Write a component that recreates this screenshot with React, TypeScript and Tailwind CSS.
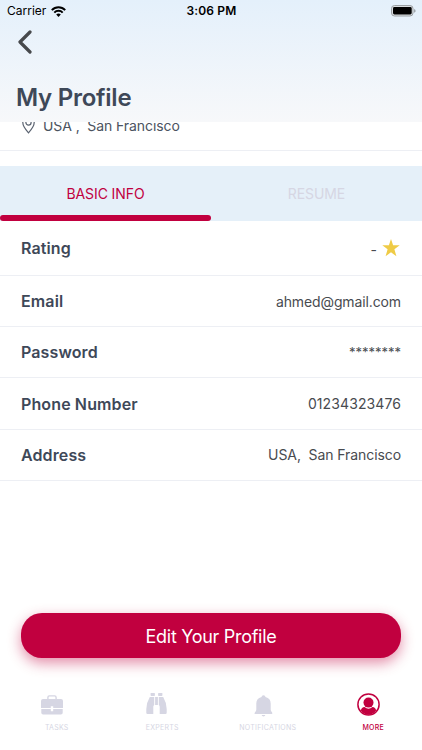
import React, { useState } from 'react';

const tabs = ['BASIC INFO', 'RESUME'];

const StatusBar: React.FC = () => (
  <div className="h-[22px] grid grid-cols-3 items-center pl-[7px] pr-[6px] text-black">
    <div className="flex items-center gap-[5px]">
      <span className="text-[12px] leading-none">Carrier</span>
      <svg className="w-[15px] h-[11px]" viewBox="0 0 15 11">
        <g fill="none" stroke="currentColor" strokeWidth="2">
          <path d="M0.8 4.1 C4.5 0.3 10.5 0.3 14.2 4.1" />
          <path d="M3.3 6.6 C5.6 4.2 9.4 4.2 11.7 6.6" />
        </g>
        <path d="M5.2 8.5 C6.5 7.2 8.5 7.2 9.8 8.5 L7.5 10.9 Z" fill="currentColor" />
      </svg>
    </div>
    <span className="text-center text-[12px] leading-none font-semibold tracking-[0.15px]">3:06 PM</span>
    <svg className="w-[25px] h-[12px] justify-self-end" viewBox="0 0 25 12">
      <rect x="0.5" y="0.5" width="21.5" height="10.5" rx="3" fill="#d9dde0" stroke="#9ba0a4" />
      <rect x="2" y="2" width="18.7" height="7.5" rx="1.4" fill="#000" />
      <path d="M23.2 4 V7.8 C25 7.2 25 4.6 23.2 4 Z" fill="#8f9498" />
    </svg>
  </div>
);

const Star: React.FC = () => (
  <svg className="w-[18px] h-[18px]" viewBox="0 0 18 18" fill="#efcb46">
    <path d="M9 0 L11.1 6.3 H17.7 L12.4 10.3 L14.4 17.3 L9 13.2 L3.6 17.3 L5.6 10.3 L0.3 6.3 H6.9 Z" />
  </svg>
);

interface RowProps {
  label: string;
  tall?: boolean;
  valueClass?: string;
  children: React.ReactNode;
}

const Row: React.FC<RowProps> = ({ label, tall, valueClass = 'text-[14px] tracking-[-0.08px]', children }) => (
  <div className={`flex items-center justify-between px-[21px] border-b border-[#edeff4] ${tall ? 'h-[54.9px]' : 'h-[51.25px]'}`}>
    <span className="text-[16px] font-semibold tracking-[0.12px] text-[#3e4858]">{label}</span>
    <span className={`text-[#484b50] whitespace-pre flex items-center ${valueClass}`}>{children}</span>
  </div>
);

const BriefcaseIcon = () => (
  <svg className="w-[22px] h-[20px]" viewBox="0 0 22 20" fill="currentColor">
    <path d="M6.2 4 V2.4 Q6.2 0.3 8.3 0.3 H13.7 Q15.8 0.3 15.8 2.4 V4 H14.4 V2.5 Q14.4 1.6 13.5 1.6 H8.5 Q7.6 1.6 7.6 2.5 V4 Z" />
    <path d="M2 4 H20 Q22 4 22 6 V12.9 H12.2 V11.2 H9.8 V12.9 H0 V6 Q0 4 2 4 Z" />
    <path d="M0.3 14 H9.8 V16.2 H12.2 V14 H21.7 V17.7 Q21.7 19.5 19.9 19.5 H2.1 Q0.3 19.5 0.3 17.7 Z" />
  </svg>
);

const BinocularsIcon = () => (
  <svg className="w-[21px] h-[21px]" viewBox="0 0 21 21" fill="currentColor">
    <rect x="4.6" y="0" width="4.3" height="2.9" rx="0.6" />
    <rect x="12.1" y="0" width="4.3" height="2.9" rx="0.6" />
    <path d="M3.8 4 H8.2 V12 Q7.3 12.6 7.3 13.8 V21 H1.5 Q0.3 21 0.3 19.8 V16 Q0.7 9 3.8 4 Z" />
    <path d="M17.2 4 H12.8 V12 Q13.7 12.6 13.7 13.8 V21 H19.5 Q20.7 21 20.7 19.8 V16 Q20.3 9 17.2 4 Z" />
    <rect x="9.1" y="4" width="2.8" height="8" />
  </svg>
);

const BellIcon = () => (
  <svg className="w-[19px] h-[22px]" viewBox="0 0 19 22" fill="currentColor">
    <path d="M9.5 0.3 Q11.3 0.3 11.5 2.1 Q16.7 3.5 16.7 8.6 V14.8 Q16.7 16.2 18 17.2 Q19 18.9 17.8 18.9 H1.2 Q0 18.9 1 17.2 Q2.3 16.2 2.3 14.8 V8.6 Q2.3 3.5 7.5 2.1 Q7.7 0.3 9.5 0.3 Z" />
    <path d="M7.6 20 H11.4 Q11 21.4 9.5 21.4 Q8 21.4 7.6 20 Z" />
  </svg>
);

const UserIcon = () => (
  <svg className="w-[23px] h-[23px]" viewBox="0 0 23 23">
    <circle cx="11.5" cy="11.5" r="10.6" fill="none" stroke="currentColor" strokeWidth="1.5" />
    <circle cx="11.5" cy="9.6" r="5" fill="currentColor" />
    <path d="M3.8 17.5 Q4.6 14.2 7.5 14 Q11.5 17.4 15.5 14 Q18.4 14.2 19.2 17.5 Q16.5 21.6 11.5 21.8 Q6.5 21.6 3.8 17.5 Z" fill="currentColor" />
  </svg>
);

const navItems = [
  { label: 'TASKS', Icon: BriefcaseIcon, iconClass: 'pt-[1px] pr-[2px]' },
  { label: 'EXPERTS', Icon: BinocularsIcon, iconClass: 'pb-[2px] pr-[4px]' },
  { label: 'NOTIFICATIONS', Icon: BellIcon, iconClass: 'pt-[3px]' },
  { label: 'MORE', Icon: UserIcon, iconClass: 'pr-[2px]' },
];

export default function App() {
  const [activeTab, setActiveTab] = useState(0);

  return (
    <div className="w-full h-[750px] bg-white flex flex-col overflow-hidden font-['Inter','Liberation_Sans',sans-serif]">
      <header className="h-[122px] shrink-0 bg-linear-to-b from-[#e4f0fb] to-[#f7f8fa]">
        <StatusBar />
        <button className="block pl-[18px] pt-[8px]" aria-label="Back">
          <svg className="w-[14px] h-[24px]" viewBox="0 0 14 24" fill="none" stroke="#47494c" strokeWidth="3.2" strokeLinecap="round" strokeLinejoin="round">
            <path d="M12 2 L2 12 L12 22" />
          </svg>
        </button>
        <h1 className="pl-[16px] pt-[27px] text-[24px] leading-[34px] font-semibold tracking-[-0.25px] text-[#3e4858]">My Profile</h1>
      </header>

      {/* location line is scrolled partly under the header */}
      <div className="h-[29px] shrink-0 overflow-hidden border-b border-[#edeff4]">
        <div className="-mt-[6px] pl-[22px] flex items-start gap-[8px]">
          <svg className="w-[13px] h-[18px]" viewBox="0 0 13 18" fill="none" stroke="#5a6270" strokeWidth="1.2">
            <path d="M6.5 16.8 Q0.8 10.5 0.8 6.5 A5.7 5.7 0 0 1 12.2 6.5 Q12.2 10.5 6.5 16.8 Z" />
            <circle cx="6.5" cy="6.5" r="2.6" />
          </svg>
          <span className="text-[14px] leading-[20px] tracking-[-0.08px] text-[#4b5360] whitespace-pre">{'USA ,  San Francisco'}</span>
        </div>
      </div>

      <div className="mt-[15px] h-[55px] shrink-0 flex bg-[#e5f0f9]">
        {tabs.map((tab, i) => (
          <button key={tab} onClick={() => setActiveTab(i)} className="flex-1 flex flex-col">
            <span className={`flex-1 w-full flex items-center justify-center pt-[5px] text-[14px] tracking-[-0.1px] ${activeTab === i ? 'text-[#c1003f]' : 'text-[#d6d6e3]'}`}>{tab}</span>
            <span className={`h-[6px] w-full rounded-full ${activeTab === i ? 'bg-[#c1003f]' : ''}`} />
          </button>
        ))}
      </div>

      <div className="flex-1">
        <Row label="Rating" tall valueClass="text-[14px] pr-[1px]"><span className="mr-[5px] pt-[3px]">-</span><Star /></Row>
        <Row label="Email" valueClass="text-[14px] tracking-[-0.12px]">ahmed@gmail.com</Row>
        <Row label="Password" valueClass="text-[13px]">********</Row>
        <Row label="Phone Number" valueClass="text-[14px] tracking-[0.1px]">01234323476</Row>
        <Row label="Address">{'USA,  San Francisco'}</Row>
      </div>

      <div className="shrink-0 px-[21px] pb-[28px]">
        <button className="w-full h-[45px] pt-[1px] rounded-[21px] bg-[#c1003f] text-white text-[18px] tracking-[-0.3px] shadow-[0_5px_14px_rgba(193,0,63,0.45)]">
          Edit Your Profile
        </button>
      </div>

      <nav className="h-[64px] shrink-0 grid grid-cols-4">
        {navItems.map(({ label, Icon, iconClass }) => (
          <div key={label} className={`flex flex-col items-center ${label === 'MORE' ? 'text-[#c1003f]' : 'text-[#d6d6e3]'}`}>
            <div className={`h-[36px] flex items-center ${iconClass}`}>
              <Icon />
            </div>
            <span className={`pl-[8px] text-[7px] leading-[12px] tracking-[0.25px] ${label === 'MORE' ? 'font-medium' : ''}`}>{label}</span>
          </div>
        ))}
      </nav>
    </div>
  );
}
